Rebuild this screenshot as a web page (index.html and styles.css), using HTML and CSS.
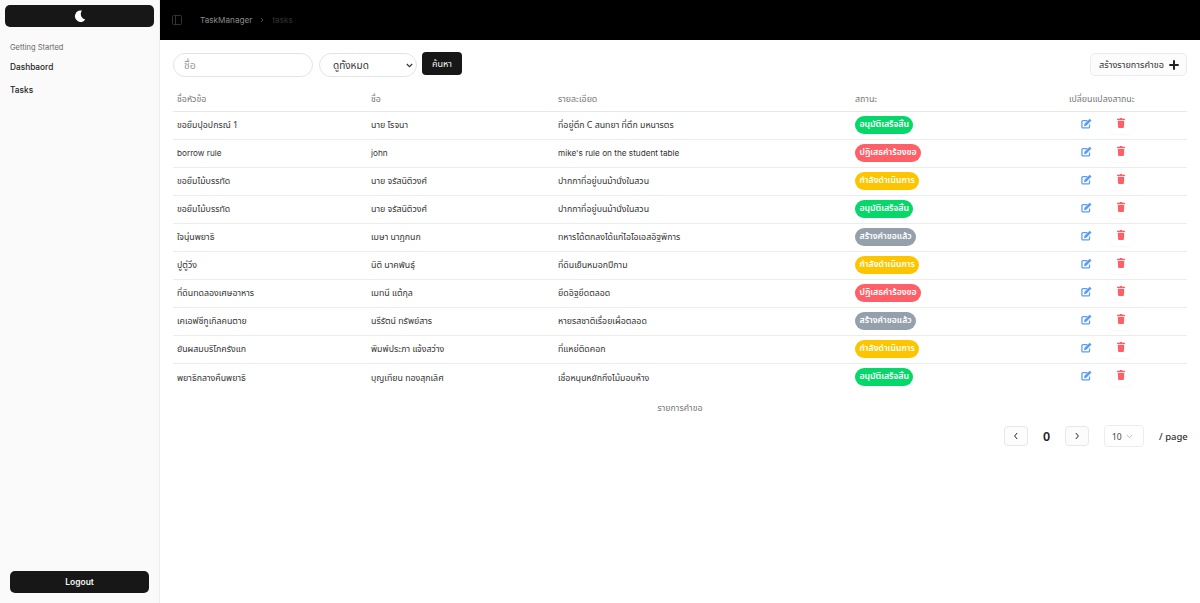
FILE: index.html
```html
<!DOCTYPE html>
<html lang="th">
<head>
<meta charset="utf-8">
<title>TaskManager</title>
<link rel="stylesheet" href="styles.css">
</head>
<body>
<div class="app">
  <aside class="sidebar">
    <button class="theme-btn" aria-label="theme">
      <svg width="12" height="12" viewBox="0 0 16 16"><path fill="#fff" d="M10.600 .8A7.600 7.600 0 1 0 15 12.800 7.600 7.600 0 0 1 10.600 .8z"/></svg>
    </button>
    <div class="nav-group">
      <div class="nav-label">Getting Started</div>
      <a class="nav-item">Dashbaord</a>
      <a class="nav-item">Tasks</a>
    </div>
    <button class="logout">Logout</button>
  </aside>
  <div class="content">
    <header class="topbar">
      <svg class="toggle" width="10" height="10" viewBox="0 0 10 10"><rect x="0.5" y="0.5" width="9" height="9" rx="1.2" fill="none" stroke="#333"/><path d="M3.500 .5v9" stroke="#333"/></svg>
      <span class="crumb">TaskManager</span>
      <svg class="chev" width="6" height="6" viewBox="0 0 6 6"><path d="M2 1l2 2-2 2" fill="none" stroke="#666" stroke-width=".8"/></svg>
      <span class="crumb-current">tasks</span>
    </header>
    <main class="main">
      <div class="toolbar">
        <div class="filters">
          <input class="name-input" placeholder="ชื่อ">
          <select class="status-select"><option>ดูทั้งหมด</option></select>
          <button class="search-btn">ค้นหา</button>
        </div>
        <button class="create-btn">สร้างรายการคำขอ
          <svg width="10" height="10" viewBox="0 0 10 10"><path d="M5 .3v9.400M.3 5h9.400" stroke="#222" stroke-width="2"/></svg>
        </button>
      </div>
      <table class="table">
        <caption>รายการคำขอ</caption>
        <colgroup><col class="c1"><col class="c2"><col class="c3"><col class="c4"><col class="c5"></colgroup>
        <thead><tr><th>ชื่อหัวข้อ</th><th>ชื่อ</th><th>รายละเอียด</th><th>สถานะ</th><th>เปลี่ยนแปลงสาถนะ</th></tr></thead>
        <tbody id="rows"></tbody>
      </table>
      <div class="pager">
        <button class="page-btn"><svg width="6" height="8" viewBox="0 0 6 8"><path d="M4.200 1L1.600 4l2.600 3" fill="none" stroke="#222" stroke-width="1"/></svg></button>
        <span class="page-num">0</span>
        <button class="page-btn"><svg width="6" height="8" viewBox="0 0 6 8"><path d="M1.800 1l2.600 3-2.600 3" fill="none" stroke="#222" stroke-width="1"/></svg></button>
        <div class="size-select"><span>10</span><svg width="7" height="5" viewBox="0 0 7 5"><path d="M.8 1l2.700 2.600L6.200 1" fill="none" stroke="#aaa" stroke-width=".8"/></svg></div>
        <span class="per-page">/ page</span>
      </div>
    </main>
  </div>
</div>
<script src="app.js"></script>
</body>
</html>
```
FILE: app.js
```js
var S = {
  ok: ['อนุมัติเสร็จสิ้น', 'ok'],
  no: ['ปฏิเสธคำร้องขอ', 'no'],
  wip: ['กำลังดำเนินการ', 'wip'],
  new: ['สร้างคำขอแล้ว', 'new']
};
var data = [
  ['ขอยืมปุอปกรณ์ 1', 'นาย โรจนา', 'ที่อยู่ตึก C สนทยา ที่ตึก มหนารตร', 'ok'],
  ['borrow rule', 'john', "mike's rule on the student table", 'no'],
  ['ขอยืมไม้บรรทัด', 'นาย จรัสนิติวงศ์', 'ปากกาที่อยู่บนม้านั่งในสวน', 'wip'],
  ['ขอยืมไม้บรรทัด', 'นาย จรัสนิติวงศ์', 'ปากกาที่อยู่บนม้านั่งในสวน', 'ok'],
  ['ใจนุ่นพยาธิ', 'เมษา นาฏกนก', 'ทหารได้ตกลงได้แก่ไอโอเอสอิฐพิการ', 'new'],
  ['ปูตู่วิ่ง', 'นิติ นาคพันธุ์', 'ที่ดินเย็นหมอกปีกาม', 'wip'],
  ['ที่ดินทดลองเศษอาหาร', 'เมทนี แต้กุล', 'ยึดอิฐยึดตลอด', 'no'],
  ['เคเอฟซีกูเกิลคนตาย', 'นรีรัตน์ ทรัพย์สาร', 'หายรสชาติเรื่อยเผื่อตลอด', 'new'],
  ['ยันผสมบริโภครังแก', 'พิมพ์ประภา แจ้งสว่าง', 'ที่แหย่ติดคอก', 'wip'],
  ['พยาธิกลางคืนพยาธิ', 'บุญเทียน ทองสุกเลิศ', 'เชื่อหนุนหยักกิ่งไม้มอบห้าง', 'ok']
];
var edit = '<svg width="11" height="11" viewBox="0 0 12 12"><path fill="none" stroke="#5b9df5" stroke-width="1.400" d="M9.300 7v2.800a1 1 0 0 1-1 1H2a1 1 0 0 1-1-1V3.800a1 1 0 0 1 1-1h5"/><path fill="#5b9df5" d="M3.800 6.400L9.500.8l2 2-5.700 5.600-2.500.6z"/></svg>';
var trash = '<svg width="8" height="10" viewBox="0 0 8 10"><path fill="#ff5f66" d="M3 0h2l.5.8H8V2H0V.8h2.500zM.7 2.800h6.600l-.4 6.500a.8.8 0 0 1-.8.7H1.900a.8.8 0 0 1-.8-.7z"/></svg>';
document.getElementById('rows').innerHTML = data.map(function (r) {
  var s = S[r[3]];
  var latin = /^[\x00-\x7f]+$/.test(r[0]) ? ' class="latin"' : '';
  return '<tr' + latin + '><td>' + r[0] + '</td><td>' + r[1] + '</td><td>' + r[2] + '</td><td><span class="pill ' + s[1] + '">' + s[0] +
    '</span></td><td><div class="actions"><span class="edit">' + edit + '</span><span class="del">' + trash + '</span></div></td></tr>';
}).join('');
```
FILE: styles.css
```css
* { box-sizing: border-box; }
html, body { margin: 0; height: 100%; }
body {
  font-family: "Noto Sans", "Noto Sans Thai", "DejaVu Sans", sans-serif;
  font-size: 9.5px;
  color: #333;
  background: #fff;
  overflow: hidden;
}
button, input, select { font-family: inherit; }
.app { display: flex; height: 603px; }
.sidebar {
  width: 160px;
  flex: none;
  background: #fafafa;
  border-right: 1px solid #ececec;
  display: flex;
  flex-direction: column;
  padding: 5px 5px 10px;
  font-family: Inter, "Noto Sans", sans-serif;
}
.theme-btn {
  width: 149px;
  height: 22px;
  border: 0;
  border-radius: 5px;
  background: #171717;
  display: flex;
  align-items: center;
  justify-content: center;
  padding: 0;
  flex: none;
}
.nav-group { flex: 1; padding: 15px 5px 0; display: flex; flex-direction: column; }
.nav-label { font-size: 7.500px; color: #666; line-height: 12px; margin-bottom: 2px; }
.nav-item { display: block; font-size: 8.300px; font-weight: 500; color: #222; line-height: 22px; }
.nav-item + .nav-item { margin-top: 1px; }
.logout {
  margin: 0 5px;
  width: 139px;
  height: 22px;
  border: 0;
  border-radius: 5px;
  background: #171717;
  color: #f5f5f5;
  font-size: 8.500px;
  font-weight: 600;
  padding: 0 0 1px;
  flex: none;
}
.content { flex: 1; min-width: 0; display: flex; flex-direction: column; }
.topbar {
  height: 40px;
  flex: none;
  background: #000;
  display: flex;
  align-items: center;
  padding-left: 12px;
  font-size: 8.200px;
  font-family: Inter, "Noto Sans", sans-serif;
}
.toggle { margin-right: 18px; }
.crumb { color: #8a8a8a; }
.chev { margin: 0 7px; }
.crumb-current { color: #333; }
.main { padding: 12px 13px 0; flex: 1; }
.toolbar { display: flex; justify-content: space-between; align-items: flex-start; height: 35px; }
.filters { display: flex; align-items: flex-start; }
.name-input {
  width: 140px;
  height: 24px;
  margin-top: 1px;
  border: 1px solid #e4e4e4;
  border-radius: 12px;
  padding: 0 10px;
  font-size: 10.500px;
  outline: none;
  background: #fff;
}
.name-input::placeholder { color: #999; }
.status-select {
  width: 98px;
  height: 24px;
  margin: 1px 0 0 6px;
  border: 1px solid #e4e4e4;
  border-radius: 12px;
  padding: 0 10px 0 13px;
  font-size: 10px;
  color: #333;
  appearance: none;
  background: #fff url("data:image/svg+xml,%3Csvg xmlns='http://www.w3.org/2000/svg' width='7' height='5' viewBox='0 0 7 5'%3E%3Cpath d='M.8 1l2.700 2.600L6.200 1' fill='none' stroke='%23333' stroke-width='1.200'/%3E%3C/svg%3E") no-repeat right 3px center;
}
.search-btn {
  width: 40px;
  height: 23px;
  margin-left: 5px;
  border: 0;
  border-radius: 4px;
  background: #171717;
  color: #f5f5f5;
  font-size: 9px;
  padding: 0;
}
.create-btn {
  width: 97px;
  height: 23px;
  margin-top: 1px;
  border: 1px solid #ececec;
  border-radius: 5px;
  background: #fcfcfc;
  color: #333;
  font-size: 9.100px;
  padding: 0 0 0 1px;
  display: flex;
  align-items: center;
  justify-content: center;
  gap: 5px;
}
.table { width: 1014px; border-collapse: collapse; table-layout: fixed; }
.table caption { caption-side: bottom; color: #777; font-size: 8.800px; padding-top: 11px; line-height: 12px; }
.c1 { width: 194px; } .c2 { width: 187px; } .c3 { width: 297px; } .c4 { width: 214px; }
.table th {
  height: 24px;
  text-align: left;
  font-weight: 400;
  color: #777;
  font-size: 8.800px;
  padding: 2px 4px 0;
  border-bottom: 1px solid #e8e8e8;
}
.table td {
  height: 28px;
  padding: 1.500px 4px 0;
  font-size: 8.800px;
  color: #333;
  border-bottom: 1px solid #ececec;
  white-space: nowrap;
}
.table tbody tr:last-child td { border-bottom: 0; }
.latin td:nth-child(-n+3) { font-family: Inter, "Noto Sans", sans-serif; font-size: 8.200px; padding-top: 0; }
.pill {
  display: inline-block;
  height: 18px;
  line-height: 17px;
  padding: 0 4.500px;
  margin-top: -1.500px;
  border-radius: 9px;
  color: #fff;
  font-size: 8.700px;
  font-weight: 600;
  vertical-align: middle;
}
.ok { background: #05d868; }
.no { background: #ff5f66; }
.wip { background: #fdc500; }
.new { background: #95a0ad; }
.actions { display: flex; align-items: center; margin-top: -6px; padding-left: 12px; }
.edit { width: 11px; height: 11px; display: flex; margin-top: 1px; }
.del {
  width: 25px;
  height: 22px;
  margin-left: 16px;
  border-radius: 5px;
  background: #fff;
  box-shadow: 0 1px 2px rgba(0,0,0,.03);
  display: flex;
  align-items: center;
  justify-content: center;
}
.pager {
  display: flex;
  justify-content: flex-end;
  align-items: center;
  width: 1014px;
  margin-top: 11px;
  height: 22px;
}
.page-btn {
  width: 24px;
  height: 20px;
  border: 1px solid #e8e8e8;
  border-radius: 4px;
  background: #fcfcfc;
  padding: 0;
  display: flex;
  align-items: center;
  justify-content: center;
}
.page-num { width: 37px; text-align: center; font-size: 12.500px; font-weight: 600; color: #222; }
.size-select {
  width: 40px;
  height: 22px;
  margin-left: 15px;
  border: 1px solid #ececec;
  border-radius: 4px;
  display: flex;
  align-items: center;
  justify-content: space-between;
  padding: 0 10px 0 7px;
  font-size: 8.500px;
  color: #444;
}
.per-page { margin-left: 15px; font-size: 9.500px; font-weight: 500; color: #333; padding-top: 1px; width: 28px; white-space: nowrap; }
```
